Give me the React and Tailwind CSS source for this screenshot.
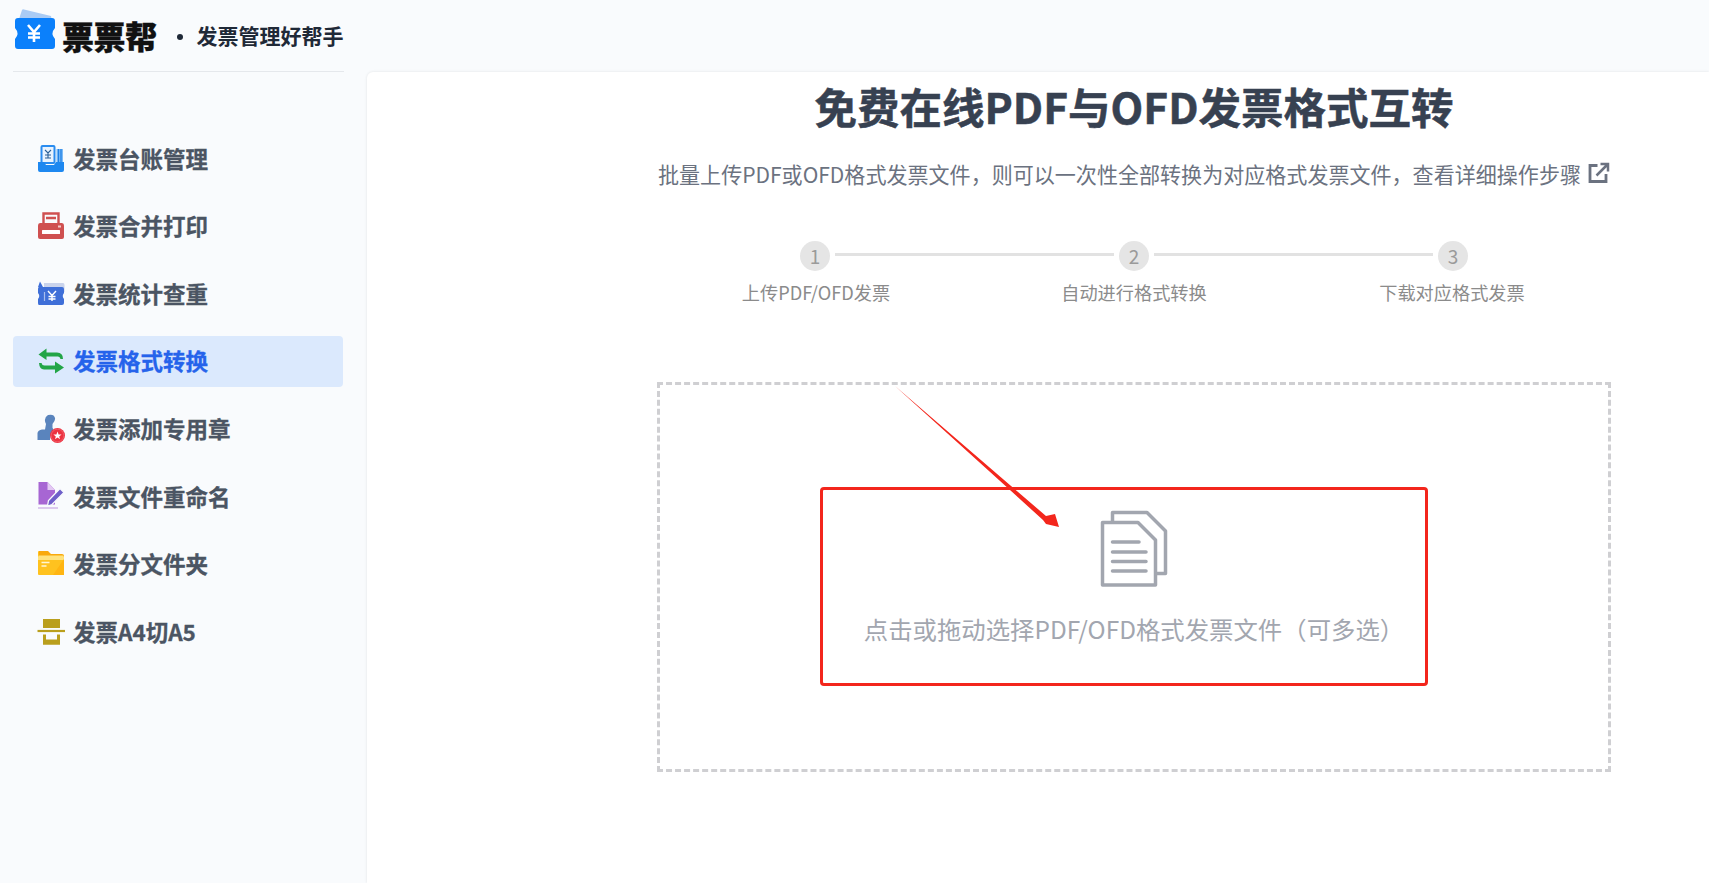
import React from "react";

const FONT = "font-['Noto_Sans_CJK_SC','Noto_Sans',sans-serif]";

function Logo() {
  return (
    <svg width="42" height="44" viewBox="0 0 42 44" className="shrink-0">
      <path d="M4 10 L7 1 Q7.5 0 9 0.5 L36 7 L37 12 Z" fill="#a9cbf5" />
      <path
        d="M3 9 H37 Q40 9 40 12 V19 Q35 24.5 40 30 V37 Q40 40 37 40 H3 Q0 40 0 37 V30 Q5 24.5 0 19 V12 Q0 9 3 9 Z"
        fill="#0b80fb"
      />
      <path d="M13 16 L19 23 L25 16 M19 23 V33 M13 24.500 H25 M13 28.500 H25" stroke="#fff" strokeWidth="2.600" fill="none" />
    </svg>
  );
}

const Ledger = () => (
  <svg width="28" height="28" viewBox="0 0 28 28">
    <rect x="4.500" y="1" width="13" height="17" rx="1" fill="#e9f3fe" stroke="#2a8cf0" strokeWidth="2" />
    <path d="M8 5 L11 8 L14 5 M8 10 H14 M8 13 H14 M11 8 V13" stroke="#2a5f96" strokeWidth="1.100" fill="none" />
    <path d="M19.500 4 H26 V18 H19.500 Z" fill="#7fbcf6" />
    <path d="M21.500 4 V18 M24 4 V18" stroke="#1f80e6" strokeWidth="1.300" />
    <path d="M1 17 H7 L9 20 H17 L19 17 H27 V25 Q27 27 25 27 H3 Q1 27 1 25 Z" fill="#1e88f0" />
  </svg>
);
const Printer = () => (
  <svg width="28" height="28" viewBox="0 0 28 28">
    <path d="M6.500 11 V1.500 H21.500 V11 M9 6 H19" stroke="#cf5050" strokeWidth="2.400" fill="none" />
    <path d="M3 11 H25 Q27 11 27 13.500 V25 Q27 27 25 27 H3 Q1 27 1 25 V13.500 Q1 11 3 11 Z" fill="#cf5050" />
    <rect x="5" y="18" width="18" height="4" rx="0.500" fill="#fff" />
    <rect x="21" y="13.500" width="3" height="2" fill="#f3c9c9" />
  </svg>
);
const TicketIcon = () => (
  <svg width="28" height="28" viewBox="0 0 28 28">
    <path d="M7 3 H26 Q27.500 3 27.500 5 V12 H7 Z" fill="#c9d3ec" />
    <path d="M3 1.500 L6 7 H1 Z" fill="#3f6fd8" />
    <path
      d="M2 7 H25 Q27 7 27 9 V13 Q24.500 16 27 19 V23 Q27 25 25 25 H2 Q1 25 1 23 V19 Q3.500 16 1 13 V9 Q1 7 2 7 Z"
      fill="#3f6fd8"
    />
    <path d="M11 11 L15 15.500 L19 11 M15 15.500 V21 M11.500 16.500 H18.500 M11.500 19 H18.500" stroke="#fff" strokeWidth="1.400" fill="none" />
    <path d="M7.500 12 V21" stroke="#a9bdec" strokeWidth="1.200" />
  </svg>
);
const Swap = () => (
  <svg width="28" height="28" viewBox="0 0 28 28">
    <path d="M9.500 1.500 L1.500 7.500 L9.500 13 V9.500 H21 Q23 9.500 23.500 12 H26 Q26 5.500 20 5.500 H9.500 Z" fill="#22a547" />
    <path d="M18 14.500 L27 20.500 L18 26.500 V22.500 H7 Q2.500 22.500 2 16 H4.500 Q5 18.500 7.500 18.500 H18 Z" fill="#22a547" />
  </svg>
);
const Stamp = () => (
  <svg width="28" height="30" viewBox="0 0 28 30">
    <path d="M11 1 Q17 -0.500 18 4 Q18.500 7 15.500 10 L15.500 14 Q17 15 16 18 Q13 20 13 26 H0.500 V19 Q1 16 5 15.500 H8 L9 10 Q6 4 11 1 Z" fill="#5a84bd" />
    <circle cx="20.500" cy="21.500" r="7.500" fill="#ec3240" />
    <circle cx="20.500" cy="21.500" r="6.300" fill="none" stroke="#ffffff" strokeOpacity="0.300" strokeWidth="0.600" />
    <path d="M20.500 17.500 L21.600 20.400 L24.600 20.500 L22.200 22.400 L23 25.300 L20.500 23.600 L18 25.300 L18.800 22.400 L16.400 20.500 L19.400 20.400 Z" fill="#fff" />
  </svg>
);
const RenameDoc = () => (
  <svg width="28" height="28" viewBox="0 0 28 28">
    <path d="M1.500 0 H10.500 L18 8 V22.500 H1.500 Z" fill="#a766d3" />
    <path d="M10.500 0 V8 H18 Z" fill="#e3c8f3" />
    <path d="M23 6.500 L27 10.500 L15 22.500 L10.500 24 L11.500 18.500 Z" fill="#6e5fc9" stroke="#f9fbfd" strokeWidth="1.300" />
    <path d="M1 26 H21" stroke="#c9a9e5" strokeWidth="1.200" />
  </svg>
);
const Folder = () => (
  <svg width="28" height="28" viewBox="0 0 28 28">
    <path d="M2 1 H11 L14 4 H25 Q27 4 27 6 V8 H2 Z" fill="#f9a90c" />
    <path d="M2 6 H26 Q27 6 27 7 V24 Q27 25 26 25 H2 Q1 25 1 24 V2 Q1 1 2 1 Z" fill="#ffc21f" />
    <path d="M2 5.500 H26 L27 7 V10 H1 V6.500 Z" fill="#ffe27d" />
    <path d="M16 25 L27 9 V25 Z" fill="#ffb512" />
    <path d="M4.500 12.500 H12.500 M4.500 16 H9.500" stroke="#fff6d5" strokeWidth="1.500" />
  </svg>
);
const Cut = () => (
  <svg width="28" height="28" viewBox="0 0 28 28">
    <rect x="6" y="1" width="17" height="9" fill="#ba9f1d" />
    <path d="M0.500 13 H28" stroke="#ba9f1d" strokeWidth="2.200" />
    <path d="M7.500 16.500 V25 H21.500 V16.500" stroke="#ba9f1d" strokeWidth="3" fill="none" />
    <rect x="6" y="21.500" width="17" height="5" fill="#ba9f1d" />
  </svg>
);

const NAV = [
  { label: "发票台账管理", Icon: Ledger },
  { label: "发票合并打印", Icon: Printer },
  { label: "发票统计查重", Icon: TicketIcon },
  { label: "发票格式转换", Icon: Swap, active: true },
  { label: "发票添加专用章", Icon: Stamp },
  { label: "发票文件重命名", Icon: RenameDoc },
  { label: "发票分文件夹", Icon: Folder },
  { label: "发票A4切A5", Icon: Cut },
];

const STEPS = ["上传PDF/OFD发票", "自动进行格式转换", "下载对应格式发票"];

function FileStack() {
  return (
    <svg width="68" height="78" viewBox="0 0 68 78" fill="none" stroke="#a2a6af" strokeWidth="3.500" strokeLinejoin="round" strokeLinecap="round">
      <path d="M12.500 11 V2.500 H47 L65.500 21 V63.500 H56" />
      <path d="M2.500 12.500 H38 L55.500 30 V75 H2.500 Z" />
      <path d="M12.500 32 H39 M12.500 42 H46 M12.500 51.500 H46 M12.500 61 H46" />
    </svg>
  );
}

function LinkOut() {
  return (
    <svg width="22" height="22" viewBox="0 0 22 22" fill="none" stroke="#6b7280" className="shrink-0 -translate-y-[1px]">
      <path d="M9.500 3.500 H2 V19.500 H18 V12" strokeWidth="2.800" />
      <path d="M8.500 13.500 L19.500 2.500 M12.500 2 H20 V9.500" strokeWidth="2.500" />
    </svg>
  );
}

function Sidebar() {
  return (
    <aside className="w-[367px] shrink-0 flex flex-col">
      <div className="h-[72px] mx-[13px] w-[331px] border-b border-[#e5e8ec] flex items-start pt-[9px]">
        <div className="ml-[2px]">
          <Logo />
        </div>
        <span className="ml-[5px] mt-[4px] text-[32px] leading-[44px] font-black text-[#111] tracking-[-0.5px] [-webkit-text-stroke:0.3px_#111]">票票帮</span>
        <span className="ml-[20px] mt-[25px] w-[6px] h-[6px] rounded-full bg-[#1f2937] shrink-0" />
        <span className="ml-[14px] mt-[4px] text-[21px] leading-[44px] font-bold text-[#1f2937] whitespace-nowrap">发票管理好帮手</span>
      </div>
      <nav className="mt-[61px] mx-[13px] w-[330px] flex flex-col gap-[16.600px]">
        {NAV.map(({ label, Icon, active }) => (
          <div
            key={label}
            className={
              "h-[51px] rounded-[4px] flex items-center pl-[24px] gap-[8px] text-[22.500px] font-bold [-webkit-text-stroke:0.3px] " +
              (active ? "bg-[#dbe9fd] text-[#2563eb]" : "text-[#4b5563]")
            }
          >
            <span className="w-[28px] h-[28px] flex items-center justify-center shrink-0">
              <Icon />
            </span>
            <span>{label}</span>
          </div>
        ))}
      </nav>
    </aside>
  );
}

function Annotations() {
  return (
    <>
      <div className="absolute left-[160px] top-[102px] w-[608px] h-[199px] border-[3px] border-[#f3261c] rounded-[4px]" />
      <svg className="absolute left-[235px] top-[1px]" width="175" height="150" viewBox="0 0 175 150">
        <polygon points="0,0 151,130 160,128 164,141 151,138 148,134" fill="#f3261c" />
      </svg>
    </>
  );
}

function Main() {
  return (
    <main className="flex-1 mt-[72px] bg-white rounded-tl-[6px] shadow-[0_0_3px_rgba(0,0,0,0.1)] pl-[290px] pr-[98px] min-h-0">
      <h1 className="text-center text-[42.500px] leading-[68px] font-bold text-[#374151] whitespace-nowrap [-webkit-text-stroke:0.5px_#374151]">
        免费在线PDF与OFD发票格式互转
      </h1>
      <div className="mt-[19px] flex items-center justify-center gap-[7px] text-[21.050px] leading-[30px] text-[#6b7280] whitespace-nowrap">
        <span>批量上传PDF或OFD格式发票文件，则可以一次性全部转换为对应格式发票文件，查看详细操作步骤</span>
        <LinkOut />
      </div>
      <div className="mt-[52px] flex items-center px-[143px]">
        {[1, 2, 3].map((n) => (
          <React.Fragment key={n}>
            <div className="w-[30px] h-[30px] rounded-full bg-[#e5e5e5] text-[#9a9a9a] text-[19px] flex items-center justify-center shrink-0">
              {n}
            </div>
            {n < 3 && <div className="flex-1 h-[3px] bg-[#e2e2e2] mx-[5px] -translate-y-[2px]" />}
          </React.Fragment>
        ))}
      </div>
      <div className="mt-[7px] grid grid-cols-3 text-center text-[18.200px] leading-[28px] text-[#8b8b8b]">
        {STEPS.map((s) => (
          <div key={s}>{s}</div>
        ))}
      </div>
      <div className="relative mt-[76px] h-[390px] border-[3px] border-dashed border-[#cfcfd2] flex flex-col items-center justify-center">
        <FileStack />
        <div className="mt-[25px] text-[24.400px] leading-[32px] text-[#a2a6af] whitespace-nowrap">
          点击或拖动选择PDF/OFD格式发票文件（可多选）
        </div>
        <Annotations />
      </div>
    </main>
  );
}

export default function App() {
  return (
    <div className={"w-[1709px] h-[883px] overflow-hidden flex bg-[#f9fbfd] " + FONT}>
      <Sidebar />
      <Main />
    </div>
  );
}
